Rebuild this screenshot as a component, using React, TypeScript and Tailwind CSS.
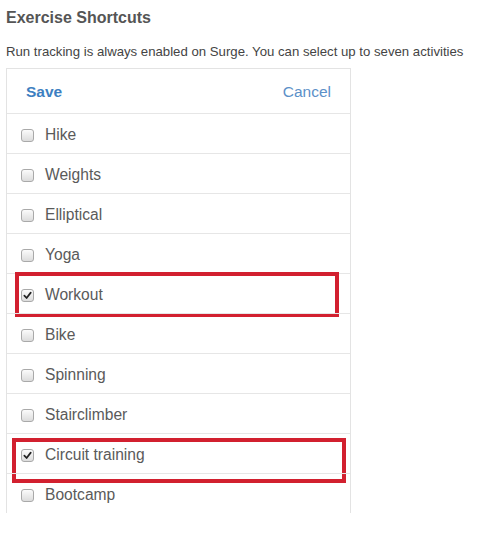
const activities = [
  { name: 'Hike', checked: false },
  { name: 'Weights', checked: false },
  { name: 'Elliptical', checked: false },
  { name: 'Yoga', checked: false },
  { name: 'Workout', checked: true, mark: 'a' },
  { name: 'Bike', checked: false },
  { name: 'Spinning', checked: false },
  { name: 'Stairclimber', checked: false },
  { name: 'Circuit training', checked: true, mark: 'b' },
  { name: 'Bootcamp', checked: false },
]

function Box({ checked }: { checked: boolean }) {
  return (
    <span className="flex h-[13px] w-[13px] shrink-0 items-center justify-center rounded-[3px] border border-[#a9a9a9] bg-gradient-to-b from-[#fbfbfb] to-[#dcdcdc]">
      {checked && (
        <svg viewBox="0 0 10 10" className="h-[9px] w-[9px]">
          <path d="M1.5 5.2 L4 7.8 L8.6 1.8" fill="none" stroke="#222" strokeWidth="1.9" strokeLinecap="round" strokeLinejoin="round" />
        </svg>
      )}
    </span>
  )
}

export default function App() {
  return (
    <div className="h-[558px] w-[495px] overflow-hidden bg-white px-[6px] pt-[8px] font-['Liberation_Sans',Arial,sans-serif]">
      <h1 className="text-[16px] font-bold leading-[20px] text-[#555]">Exercise Shortcuts</h1>
      <p className="mt-[15px] text-[13.2px] leading-[18px] text-[#444]">
        Run tracking is always enabled on Surge. You can select up to seven activities
      </p>

      <div className="mt-[7px] w-[345px] border-x border-t border-[#e3e3e3]">
        <div className="flex h-[44px] items-center justify-between pl-[19px] pr-[19px] pt-[1px] text-[15.5px]">
          <span className="font-bold text-[#3d7fc1]">Save</span>
          <span className="text-[#5c90c8]">Cancel</span>
        </div>

        {activities.map((a) => (
          <div key={a.name} className="relative flex h-[40px] items-center gap-[11px] border-t border-[#e6e6e6] pl-[14px] pt-[3px] text-[15.6px] text-[#5a5a5a]">
            <Box checked={a.checked} />
            <span>{a.name}</span>
            {a.mark === 'a' && (
              <div className="pointer-events-none absolute left-[8px] top-[-2px] h-[45px] w-[324px] border-[4px] border-[#d2202f]" />
            )}
            {a.mark === 'b' && (
              <div className="pointer-events-none absolute left-[5px] top-[4px] h-[45px] w-[334px] border-[4px] border-[#d2202f]" />
            )}
          </div>
        ))}
      </div>
    </div>
  )
}
